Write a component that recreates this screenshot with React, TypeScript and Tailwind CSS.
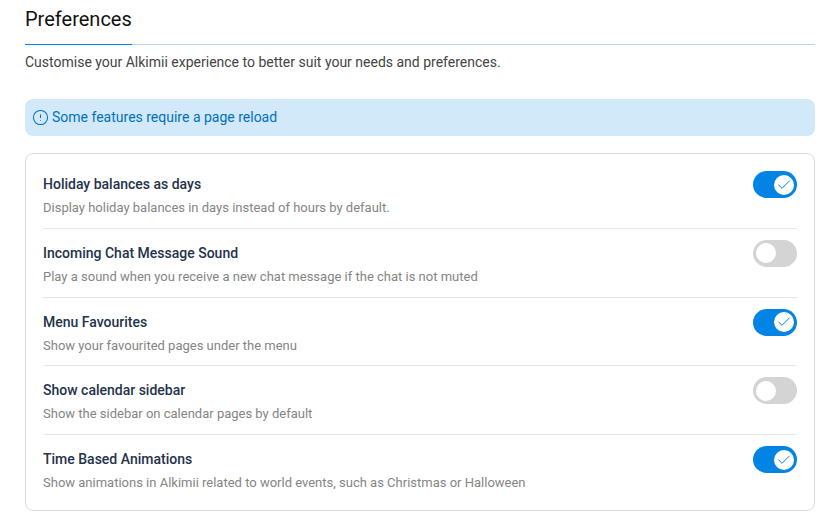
import React from 'react';
import { CircleAlert, Check } from 'lucide-react';

const prefs = [
  { title: 'Holiday balances as days', desc: 'Display holiday balances in days instead of hours by default.', on: true },
  { title: 'Incoming Chat Message Sound', desc: 'Play a sound when you receive a new chat message if the chat is not muted', on: false },
  { title: 'Menu Favourites', desc: 'Show your favourited pages under the menu', on: true },
  { title: 'Show calendar sidebar', desc: 'Show the sidebar on calendar pages by default', on: false },
  { title: 'Time Based Animations', desc: 'Show animations in Alkimii related to world events, such as Christmas or Halloween', on: true },
];

function Toggle({ on }: { on: boolean }) {
  return (
    <div className={`flex h-[27px] w-[44px] shrink-0 items-center rounded-full px-[3px] ${on ? 'justify-end bg-[#0284e4]' : 'justify-start bg-[#d4d4d4]'}`}>
      <div className="flex h-[20px] w-[20px] items-center justify-center rounded-full bg-white">
        {on && <Check className="h-[16px] w-[16px] text-[#0284e4]" strokeWidth={1.5} />}
      </div>
    </div>
  );
}

export default function App() {
  return (
    <div className="h-[529px] w-[831px] overflow-hidden bg-white pl-[25px] pr-[16px] font-['Roboto',sans-serif]">
      <div className="flex h-[45px] border-b border-[#c3d0e6]">
        <h1 className="-mb-px h-[45px] border-b border-[#0284e4] pt-[7px] text-[20px] leading-[25px] font-normal text-[#111111]">Preferences</h1>
      </div>
      <p className="mt-[8px] text-[14px] leading-[18px] text-[#444444]">Customise your Alkimii experience to better suit your needs and preferences.</p>
      <div className="mt-[28px] flex h-[37px] items-center gap-[3px] rounded-[8px] bg-[#d2e9fa] pl-[7px] text-[14px] text-[#0071bd]">
        <CircleAlert className="h-[17px] w-[17px]" strokeWidth={1.5} />
        <span>Some features require a page reload</span>
      </div>
      <div className="mt-[17px] h-[358px] rounded-[8px] border border-[#d9d9d9] px-[17px] pt-[6px]">
        {prefs.map((p, i) => (
          <div key={p.title} className={`flex h-[68.8px] items-start justify-between pt-[11px] ${i < prefs.length - 1 ? 'border-b border-[#e6e8ef]' : ''}`}>
            <div className="pt-[4px]">
              <div className="text-[14px] leading-[18px] font-medium text-[#25324b]">{p.title}</div>
              <div className="mt-[6px] text-[13px] leading-[18px] text-[#858585]">{p.desc}</div>
            </div>
            <Toggle on={p.on} />
          </div>
        ))}
      </div>
    </div>
  );
}
